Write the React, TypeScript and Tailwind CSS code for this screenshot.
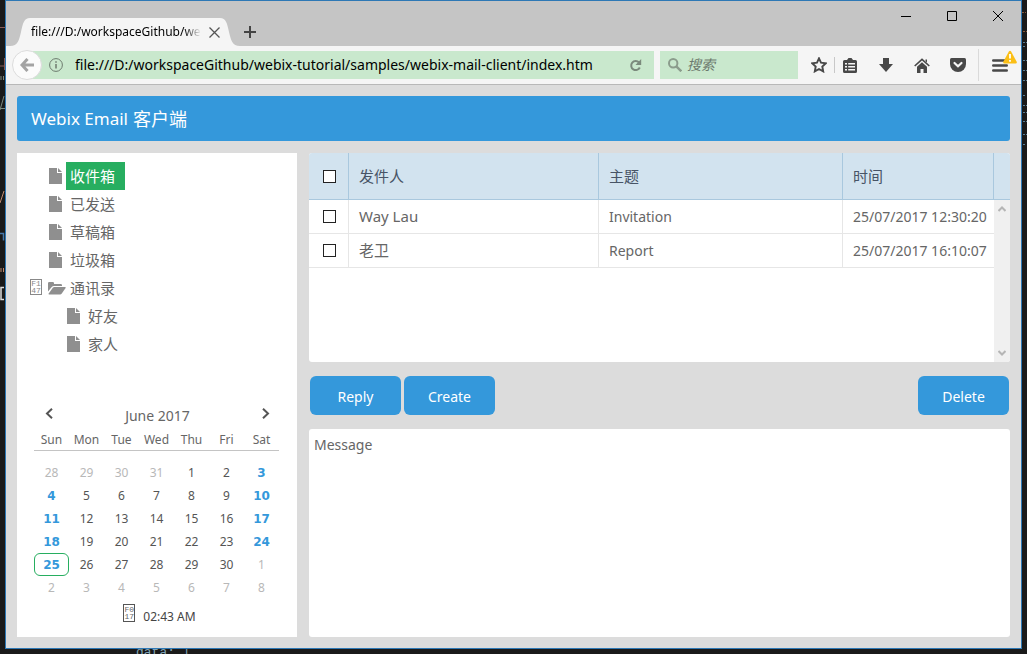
import { useState } from 'react';

interface Folder {
  id: string;
  label: string;
  level: number;
  open?: boolean;
}

interface Mail {
  from: string;
  subject: string;
  time: string;
}

const FOLDERS: Folder[] = [
  { id: 'inbox', label: '收件箱', level: 0 },
  { id: 'sent', label: '已发送', level: 0 },
  { id: 'drafts', label: '草稿箱', level: 0 },
  { id: 'trash', label: '垃圾箱', level: 0 },
  { id: 'contacts', label: '通讯录', level: 0, open: true },
  { id: 'friends', label: '好友', level: 1 },
  { id: 'family', label: '家人', level: 1 },
];

const MAILS: Mail[] = [
  { from: 'Way Lau', subject: 'Invitation', time: '25/07/2017 12:30:20' },
  { from: '老卫', subject: 'Report', time: '25/07/2017 16:10:07' },
];

const WEEKDAYS = ['Sun', 'Mon', 'Tue', 'Wed', 'Thu', 'Fri', 'Sat'];

const WEEKS = [
  [28, 29, 30, 31, 1, 2, 3],
  [4, 5, 6, 7, 8, 9, 10],
  [11, 12, 13, 14, 15, 16, 17],
  [18, 19, 20, 21, 22, 23, 24],
  [25, 26, 27, 28, 29, 30, 1],
  [2, 3, 4, 5, 6, 7, 8],
];

const URL = 'file:///D:/workspaceGithub/webix-tutorial/samples/webix-mail-client/index.html';

function FileIcon() {
  return (
    <svg width="13" height="16" viewBox="0 0 13 16" fill="#8f8f8f">
      <path d="M0 0h8v5h5v11H0z" />
      <path d="M9 0l4 4H9z" />
    </svg>
  );
}

function FolderOpenIcon() {
  return (
    <svg width="18" height="13" viewBox="0 0 18 13" fill="#8f8f8f">
      <path d="M0 9.5V1.2Q0 0 1.2 0h3.6Q6 0 6 1.2V2h6.8q1.2 0 1.2 1.2V4H6Q4.5 4 3.5 5.2z" />
      <path d="M5 5.6Q5.5 5 6.3 5H17q1.2 0 .6 1l-4 5.8q-.6.7-1.4.7H1.2q-1.2 0-.5-1z" />
    </svg>
  );
}

// Box shown for an icon-font character that has no glyph
function MissingGlyph({ rows, className }: { rows: string[]; className: string }) {
  return (
    <span
      className={`flex w-3 shrink-0 flex-col items-center justify-center border font-['Liberation_Mono',monospace] text-[8px] leading-[7px] ${className}`}
    >
      {rows.map((row) => (
        <span key={row}>{row}</span>
      ))}
    </span>
  );
}

function TitleBar() {
  return (
    <header className="flex h-[45px] shrink-0 items-end bg-[#c5c5c5]">
      <div className="ml-1 flex h-7">
        <svg width="20" height="28" viewBox="0 0 20 28" fill="#f5f5f5">
          <path d="M0 28C8 28 9 22 11 14C13 5 14 0 20 0V28z" />
        </svg>
        <div className="flex w-[190px] items-center bg-[#f5f5f5] pl-px">
          <span className="w-[171px] overflow-hidden whitespace-nowrap bg-linear-to-r from-black from-90% to-transparent bg-clip-text text-xs text-transparent">
            file:///D:/workspaceGithub/we
          </span>
          <button aria-label="Close tab" className="ml-2 shrink-0">
            <svg width="11" height="11" viewBox="0 0 11 11" stroke="#555" strokeWidth="1.3">
              <path d="M.5.5l10 10M10.5.5l-10 10" />
            </svg>
          </button>
        </div>
        <svg width="20" height="28" viewBox="0 0 20 28" fill="#f5f5f5">
          <path d="M20 28C12 28 11 22 9 14C7 5 6 0 0 0V28z" />
        </svg>
        <button aria-label="New tab" className="flex w-5 items-center justify-center">
          <svg width="12" height="12" viewBox="0 0 12 12" stroke="#444" strokeWidth="2">
            <path d="M6 0v12M0 6h12" />
          </svg>
        </button>
      </div>
      <div className="ml-auto flex self-start">
        <button aria-label="Minimize" className="flex h-[30px] w-[46px] items-center justify-center">
          <svg width="10" height="11" stroke="#000"><path d="M0 5.5h10" /></svg>
        </button>
        <button aria-label="Maximize" className="flex h-[30px] w-[46px] items-center justify-center">
          <svg width="10" height="10" fill="none" stroke="#000"><path d="M.5.5h9v9h-9z" /></svg>
        </button>
        <button aria-label="Close" className="flex h-[30px] w-[46px] items-center justify-center">
          <svg width="10" height="10" stroke="#000"><path d="M0 0l10 10M10 0L0 10" /></svg>
        </button>
      </div>
    </header>
  );
}

function Toolbar() {
  return (
    <nav className="flex h-[39px] shrink-0 items-center border-b border-[#b8b8b8] bg-[#f5f5f5] pl-1.5">
      <button
        aria-label="Back"
        className="z-10 flex size-[30px] shrink-0 items-center justify-center rounded-full border border-[#dcdcdc] bg-[#fbfbfb]"
      >
        <svg width="14" height="14" viewBox="0 0 14 14" fill="none" stroke="#a3a3a3" strokeWidth="3">
          <path d="M7.5 1L2 7l5.5 6M2.5 7H14" />
        </svg>
      </button>
      <div className="-ml-3 flex h-7 grow items-center bg-[#c9e8cd] pr-3 pl-[19px]">
        <svg width="14" height="14" viewBox="0 0 14 14" fill="none" stroke="#6d7a6e" className="shrink-0">
          <circle cx="7" cy="7" r="6.4" />
          <path d="M7 6v4.5M7 3.2v1.6" strokeWidth="1.5" />
        </svg>
        <input
          aria-label="Address"
          readOnly
          value={URL}
          className="ml-3 min-w-0 grow text-sm text-black outline-none"
        />
        <button aria-label="Reload" className="ml-9 shrink-0">
          <svg width="13" height="13" viewBox="0 0 13 13" fill="none" stroke="#7b8a7c" strokeWidth="2">
            <path d="M10 3.5A4.5 4.5 0 1 0 10.8 8.5" />
            <path d="M12.2 0v6H6.5z" fill="#7b8a7c" stroke="none" />
          </svg>
        </button>
      </div>
      <div className="ml-1.5 flex h-7 w-[138px] shrink-0 items-center bg-[#c9e8cd] pl-2">
        <svg width="14" height="14" viewBox="0 0 14 14" fill="none" stroke="#8b9c8c" strokeWidth="2" className="shrink-0">
          <circle cx="5.2" cy="5.2" r="4.2" />
          <path d="M8.3 8.3l5 5" strokeWidth="2.4" />
        </svg>
        <input
          aria-label="Search"
          placeholder="搜索"
          className="ml-[5px] min-w-0 grow text-sm italic outline-none placeholder:text-[#6d7a6e]"
        />
      </div>
      <div className="flex shrink-0 items-center text-[#484848]">
        <button aria-label="Bookmark" className="ml-[13px]">
          <svg width="16" height="16" viewBox="0 0 16 16" fill="none" stroke="currentColor" strokeWidth="1.9">
            <path d="M8 1.3l2 4.3 4.9.6-3.6 3.3.9 4.9L8 12l-4.200 2.400.9-4.900L1.100 6.200 6 5.600z" />
          </svg>
        </button>
        <span className="ml-[7px] h-4 w-px bg-[#c8c8c8]" />
        <button aria-label="Bookmarks list" className="ml-2">
          <svg width="14" height="15" viewBox="0 0 14 15">
            <path fill="currentColor" d="M4 2L5.5 0h3L10 2h2.5Q14 2 14 3.5v10Q14 15 12.5 15h-11Q0 15 0 13.5v-10Q0 2 1.5 2z" />
            <path stroke="#f5f5f5" strokeWidth="1.5" d="M2 5.7h2M5.2 5.7H12M2 8.7h2M5.2 8.7H12M2 11.7h2M5.2 11.7H12" />
          </svg>
        </button>
        <button aria-label="Downloads" className="ml-[22px]">
          <svg width="14" height="14" viewBox="0 0 14 14" fill="currentColor">
            <path d="M4 0h6v6h4l-7 8-7-8h4z" />
          </svg>
        </button>
        <button aria-label="Home" className="ml-[21px]">
          <svg width="16" height="15" viewBox="0 0 16 15">
            <path fill="none" stroke="currentColor" strokeWidth="1.6" d="M.7 8L8 1.3 15.3 8" />
            <path fill="currentColor" d="M8 4.2l5 4.5V15H9.5v-4h-3v4H3V8.7zM11.5 1.5h1.5v3l-1.5-1.3z" />
          </svg>
        </button>
        <button aria-label="Pocket" className="ml-5">
          <svg width="16" height="14" viewBox="0 0 16 14">
            <path fill="currentColor" d="M1.5 0h13Q16 0 16 1.5V6a8 8 0 0 1-16 0V1.5Q0 0 1.5 0z" />
            <path fill="none" stroke="#f5f5f5" strokeWidth="2.2" strokeLinecap="round" d="M4.5 5L8 8.3 11.5 5" />
          </svg>
        </button>
        <span className="ml-3 h-8 w-px bg-[#dadada]" />
        <button aria-label="Menu" className="relative mr-[13px] ml-[13px]">
          <svg width="16" height="13" viewBox="0 0 16 13" stroke="currentColor" strokeWidth="2.6" strokeLinecap="round">
            <path d="M1.3 1.5h13.4M1.3 6.5h13.4M1.3 11.5h13.4" />
          </svg>
          <svg width="14" height="14" viewBox="0 0 14 13" className="absolute -top-[9px] left-[11px]">
            <path fill="#fbbf16" d="M6 .8q1-1.2 2 0l5.7 10.5q.5 1.5-1 1.7H1.3q-1.5-.2-1-1.7z" />
            <path stroke="#fff" strokeWidth="1.8" d="M7 3.5v4.5M7 9.5v1.8" />
          </svg>
        </button>
      </div>
    </nav>
  );
}

function FolderTree() {
  const [selected, setSelected] = useState('inbox');

  return (
    <ul className="pt-[9px] text-[15px]">
      {FOLDERS.map((folder) => (
        <li key={folder.id} className={`flex h-7 items-center ${folder.level ? 'pl-[31px]' : 'pl-[13px]'}`}>
          <span className="flex w-[18px] shrink-0">
            {folder.open && <MissingGlyph rows={['F1', '47']} className="mb-[3px] h-4 border-[#888] text-[#888]" />}
          </span>
          <span className="flex w-[18px] shrink-0 justify-center">
            {folder.open ? <FolderOpenIcon /> : <span className="mr-[3px]"><FileIcon /></span>}
          </span>
          <button
            onClick={() => setSelected(folder.id)}
            className={`h-7 pr-2.5 pl-1 ${selected === folder.id ? 'bg-[#27ae60] text-white' : 'text-[#666]'}`}
          >
            {folder.label}
          </button>
        </li>
      ))}
    </ul>
  );
}

function Calendar() {
  const dayClass = (week: number, col: number, day: number) => {
    const outside = (week === 0 && day > 20) || (week > 3 && day < 10);
    if (outside) return 'text-[#b8b8b8]';
    if (col === 0 || col === 6) return "font-['DejaVu_Sans',sans-serif] font-bold text-[#3498db]";
    return 'text-[#555]';
  };

  return (
    <div className="mt-auto pr-[18px] pb-[7px] pl-[17px] text-xs text-[#666]">
      <div className="flex h-[30px] items-center justify-between pr-[9px] pb-0.5 pl-[11px]">
        <button aria-label="Previous month" className="pb-1">
          <svg width="9" height="11" viewBox="0 0 9 11" fill="none" stroke="#555" strokeWidth="2">
            <path d="M7 .8L2 5.5l5 4.7" />
          </svg>
        </button>
        <span className="text-sm">June 2017</span>
        <button aria-label="Next month" className="pb-1">
          <svg width="9" height="11" viewBox="0 0 9 11" fill="none" stroke="#555" strokeWidth="2">
            <path d="M2 .8l5 4.7-5 4.7" />
          </svg>
        </button>
      </div>
      <table className="w-full table-fixed text-center">
        <thead>
          <tr className="border-b border-[#c4c4c4]">
            {WEEKDAYS.map((name) => (
              <th key={name} className="h-[18px] p-0 pb-0.5 font-normal">{name}</th>
            ))}
          </tr>
        </thead>
        <tbody>
          <tr className="h-[11px]" />
          {WEEKS.map((week, w) => (
            <tr key={w}>
              {week.map((day, d) => (
                <td key={d} className="p-0">
                  <button
                    className={`block h-[23px] w-full ${dayClass(w, d, day)} ${
                      day === 25 ? 'rounded-md border border-[#27ae60]' : ''
                    }`}
                  >
                    {day}
                  </button>
                </td>
              ))}
            </tr>
          ))}
        </tbody>
      </table>
      <div className="mt-[5px] flex h-[26px] items-center justify-center gap-2 pl-1.5 text-[#444]">
        <MissingGlyph rows={['F0', '17']} className="mb-2 h-[18px] border-[#555] text-[#666]" />
        <span>02:43 AM</span>
      </div>
    </div>
  );
}

function Check({ label }: { label: string }) {
  return (
    <input
      type="checkbox"
      aria-label={label}
      className="ml-3.5 block size-[13px] appearance-none border border-[#222] bg-white checked:bg-[#3498db]"
    />
  );
}

function MailTable() {
  return (
    <div className="relative h-[209px] shrink-0 overflow-hidden rounded-[3px] bg-white">
      <table className="w-full table-fixed border-separate border-spacing-0 text-left text-[15px] text-[#666]">
        <colgroup>
          <col className="w-10" />
          <col className="w-[250px]" />
          <col className="w-[244px]" />
          <col />
          <col className="w-4" />
        </colgroup>
        <thead>
          <tr className="h-[47px] bg-[#d2e3ef] text-[#475466] *:border-b *:border-[#a9c8de] *:p-0 *:font-normal">
            <th className="border-r"><Check label="Select all" /></th>
            <th className="border-r"><span className="px-2.5">发件人</span></th>
            <th className="border-r"><span className="px-2.5">主题</span></th>
            <th className="border-r"><span className="px-2.5">时间</span></th>
            <th />
          </tr>
        </thead>
        <tbody>
          {MAILS.map((mail) => (
            <tr key={mail.time} className="h-[34px] *:border-b *:border-[#e6e6e6] *:p-0">
              <td className="border-r"><Check label={mail.from} /></td>
              <td className="border-r"><span className="px-2.5">{mail.from}</span></td>
              <td className="border-r text-sm"><span className="px-2.5">{mail.subject}</span></td>
              <td className="text-sm whitespace-nowrap"><span className="pl-2.5">{mail.time}</span></td>
              <td />
            </tr>
          ))}
        </tbody>
      </table>
      <div className="absolute top-[47px] right-0 bottom-0 flex w-4 flex-col items-center justify-between bg-[#f0f0f0] py-1.5">
        <svg width="8" height="6" fill="none" stroke="#b5b5b5" strokeWidth="2"><path d="M.5 5L4 1.5 7.5 5" /></svg>
        <svg width="8" height="6" fill="none" stroke="#b5b5b5" strokeWidth="2"><path d="M.5 1L4 4.5 7.5 1" /></svg>
      </div>
    </div>
  );
}

function ActionButton({ label }: { label: string }) {
  return (
    <button className="h-[39px] w-[91px] rounded-md bg-[#3498db] pt-0.5 text-sm text-white hover:bg-[#2f8bc9]">
      {label}
    </button>
  );
}

export default function App() {
  return (
    <div className="flex h-screen min-h-[640px] flex-col overflow-hidden bg-[#1a1a1a] font-['Noto_Sans','Noto_Sans_CJK_SC',sans-serif]">
      <div className="flex min-h-0 grow">
        {/* slivers of the editor behind the browser */}
        <svg className="w-[5px] shrink-0" fill="none">
          <path stroke="#8a5a55" d="M0 27.5h5M4.5 58v12M0 66h5" />
          <path stroke="#7d8a80" d="M4 96L0 110M0 108.5h5M1 76v4M3.5 76v4" />
          <path stroke="#c08a70" d="M4 191L0 203M1 268v4M3.5 268v4" />
          <path stroke="#4678a8" strokeWidth="1.5" d="M0 233.5h3.5v7" />
          <path stroke="#ddd" strokeWidth="1.5" d="M4 287.5H1v12h3" />
        </svg>
        <div className="flex min-w-0 grow flex-col border border-[#2d78b5] bg-[#dcdcdc]">
          <TitleBar />
          <Toolbar />
          <main className="flex min-h-0 grow flex-col gap-3 p-[11px]">
            <h1 className="flex h-[45px] shrink-0 items-center gap-[5px] rounded-[3px] bg-[#3498db] px-3.5 text-[17px] text-white">
              Webix Email <span className="text-lg">客户端</span>
            </h1>
            <div className="flex min-h-0 grow gap-3">
              <aside className="flex w-[280px] shrink-0 flex-col bg-white">
                <FolderTree />
                <Calendar />
              </aside>
              <section className="flex min-w-0 grow flex-col gap-3.5">
                <MailTable />
                <div className="flex shrink-0 gap-[3px] px-px">
                  <ActionButton label="Reply" />
                  <ActionButton label="Create" />
                  <span className="grow" />
                  <ActionButton label="Delete" />
                </div>
                <div className="grow rounded-[3px] bg-white px-[5px] py-1.5 text-sm text-[#666]">Message</div>
              </section>
            </div>
          </main>
        </div>
        <svg className="w-[5px] shrink-0" fill="none" strokeDasharray="2 1">
          <path stroke="#8a5a3c" d="M0 12.5h4M1 31.5h4" />
          <path stroke="#5b7f96" d="M1 42.5h4M1 46.5h3M1 60.5h4M1 70.5h4M1 80.5h4M1 95.5h3M1 105.5h4M1 112.5h4M1 121.5h4M1 134.5h4M1 144.5h3" />
        </svg>
      </div>
      <div className="flex h-[5px] shrink-0 items-end overflow-hidden pl-[136px] font-['Liberation_Mono',monospace] text-[13px] leading-[14px] text-[#7fa3b5]">
        <span className="-mb-[6px] whitespace-pre">data: |</span>
      </div>
    </div>
  );
}
